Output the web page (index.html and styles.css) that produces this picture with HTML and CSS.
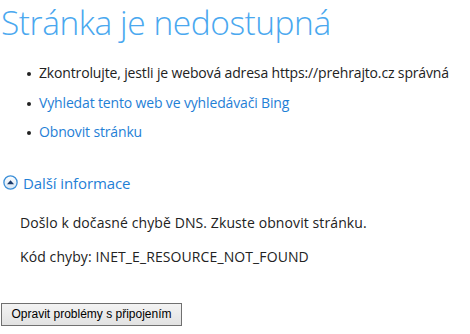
FILE: index.html
```html
<!DOCTYPE html>
<html lang="cs">
<head>
<meta charset="utf-8">
<link rel="stylesheet" href="styles.css">
</head>
<body>
<div class="page">
  <h1 class="title">Stránka je nedostupná</h1>
  <ul class="tips">
    <li>Zkontrolujte, jestli je webová adresa https://prehrajto.cz správná</li>
    <li><a class="link" href="#">Vyhledat tento web ve vyhledávači Bing</a></li>
    <li><a class="link" href="#">Obnovit stránku</a></li>
  </ul>
  <div class="more">
    <svg class="more-icon" width="15" height="15" viewBox="0 0 15 15">
      <defs>
        <linearGradient id="g" x1="0" y1="0" x2="0" y2="1">
          <stop offset="0" stop-color="#ffffff"/>
          <stop offset="1" stop-color="#d6e6f5"/>
        </linearGradient>
      </defs>
      <circle cx="7.5" cy="7.5" r="6.6" fill="url(#g)" stroke="#3c8fd8" stroke-width="1.3"/>
      <path d="M4 9.3 L7.5 5.2 L11 9.3 Z" fill="#1a3a6a"/>
    </svg>
    <span class="more-text">Další informace</span>
  </div>
  <div class="details">
    <p class="detail">Došlo k dočasné chybě DNS. Zkuste obnovit stránku.</p>
    <p class="detail">Kód chyby: INET_E_RESOURCE_NOT_FOUND</p>
  </div>
  <button class="fix">Opravit problémy s připojením</button>
</div>
</body>
</html>
```

FILE: styles.css
```css
html, body {
  margin: 0;
  padding: 0;
  background: #fff;
  overflow: hidden;
}
.page {
  width: 470px;
  height: 334px;
  font-family: "Segoe UI", "Open Sans", "Noto Sans", sans-serif;
  color: #222;
}
.title {
  margin: 0;
  padding: 0 0 0 1px;
  font-family: "Segoe UI Light", "Open Sans", sans-serif;
  font-weight: 300;
  font-size: 33.5px;
  line-height: 44px;
  color: #4aa8ef;
  letter-spacing: -0.45px;
  white-space: nowrap;
}
.tips {
  margin: 14px 0 0 0;
  padding: 0 0 0 39px;
  list-style: none;
  font-size: 14px;
  letter-spacing: -0.15px;
}
.tips li {
  position: relative;
  height: 29.5px;
  line-height: 29.5px;
  white-space: nowrap;
}
.tips li::before {
  content: "";
  position: absolute;
  left: -12px;
  top: 14px;
  width: 4px;
  height: 4px;
  border-radius: 50%;
  background: #222;
}
.link {
  color: #1f80d6;
  text-decoration: none;
}
.more {
  display: flex;
  align-items: center;
  gap: 5px;
  margin: 24px 0 0 3px;
  height: 24px;
}
.more-icon {
  display: block;
}
.more-text {
  color: #1f80d6;
  font-size: 15px;
  letter-spacing: -0.1px;
}
.details {
  margin: 11px 0 0 20px;
  font-size: 14px;
  letter-spacing: 0.1px;
}
.detail {
  margin: 0;
  line-height: 34px;
}
.fix {
  display: block;
  margin: 29px 0 0 1px;
  height: 23px;
  width: 181px;
  padding: 0;
  border: 1px solid #707070;
  border-radius: 0;
  background: linear-gradient(#f3f3f3, #e2e2e2);
  font-family: "Liberation Sans", Arial, sans-serif;
  font-size: 12px;
  color: #000;
}
```
